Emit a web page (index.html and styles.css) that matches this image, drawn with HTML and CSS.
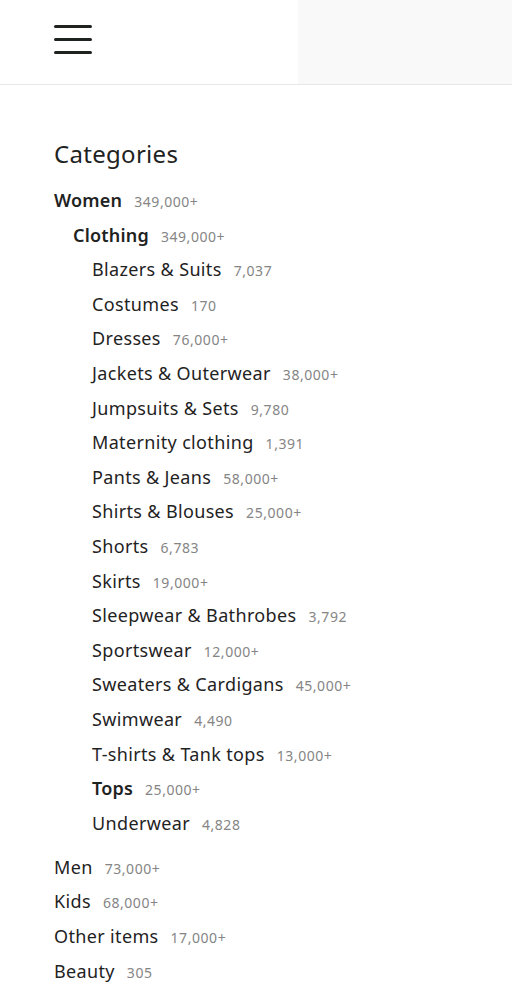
FILE: index.html
```html
<!DOCTYPE html>
<html lang="en">
<head>
<meta charset="utf-8">
<title>Categories</title>
<link rel="stylesheet" href="styles.css">
</head>
<body>
<header class="header">
  <div class="header-left">
    <button class="menu-btn" aria-label="Menu">
      <svg width="38" height="29" viewBox="0 0 38 29" aria-hidden="true">
        <path d="M1.5 1.5H36.5M1.5 14.5H36.5M1.5 27.5H36.5" stroke="#1f231f" stroke-width="3" stroke-linecap="round" fill="none"/>
      </svg>
    </button>
  </div>
  <div class="header-right"></div>
</header>
<main class="content">
  <h2 class="title">Categories</h2>
  <ul class="tree">
    <li class="row lvl0 active"><span class="label">Women</span><span class="count">349,000+</span></li>
    <li class="row lvl1 active"><span class="label">Clothing</span><span class="count">349,000+</span></li>
    <li class="row lvl2"><span class="label">Blazers &amp; Suits</span><span class="count">7,037</span></li>
    <li class="row lvl2"><span class="label">Costumes</span><span class="count">170</span></li>
    <li class="row lvl2"><span class="label">Dresses</span><span class="count">76,000+</span></li>
    <li class="row lvl2"><span class="label">Jackets &amp; Outerwear</span><span class="count">38,000+</span></li>
    <li class="row lvl2"><span class="label">Jumpsuits &amp; Sets</span><span class="count">9,780</span></li>
    <li class="row lvl2"><span class="label">Maternity clothing</span><span class="count">1,391</span></li>
    <li class="row lvl2"><span class="label">Pants &amp; Jeans</span><span class="count">58,000+</span></li>
    <li class="row lvl2"><span class="label">Shirts &amp; Blouses</span><span class="count">25,000+</span></li>
    <li class="row lvl2"><span class="label">Shorts</span><span class="count">6,783</span></li>
    <li class="row lvl2"><span class="label">Skirts</span><span class="count">19,000+</span></li>
    <li class="row lvl2"><span class="label">Sleepwear &amp; Bathrobes</span><span class="count">3,792</span></li>
    <li class="row lvl2"><span class="label">Sportswear</span><span class="count">12,000+</span></li>
    <li class="row lvl2"><span class="label">Sweaters &amp; Cardigans</span><span class="count">45,000+</span></li>
    <li class="row lvl2"><span class="label">Swimwear</span><span class="count">4,490</span></li>
    <li class="row lvl2"><span class="label">T-shirts &amp; Tank tops</span><span class="count">13,000+</span></li>
    <li class="row lvl2 active"><span class="label">Tops</span><span class="count">25,000+</span></li>
    <li class="row lvl2 last"><span class="label">Underwear</span><span class="count">4,828</span></li>
    <li class="row lvl0"><span class="label">Men</span><span class="count">73,000+</span></li>
    <li class="row lvl0"><span class="label">Kids</span><span class="count">68,000+</span></li>
    <li class="row lvl0"><span class="label">Other items</span><span class="count">17,000+</span></li>
    <li class="row lvl0"><span class="label">Beauty</span><span class="count">305</span></li>
  </ul>
</main>
</body>
</html>
```
FILE: styles.css
```css
* { box-sizing: border-box; }
html, body {
  margin: 0;
  padding: 0;
  background: #ffffff;
  font-family: "Noto Sans", "Open Sans", sans-serif;
  color: #1f231f;
}
.header {
  display: flex;
  height: 85px;
  border-bottom: 1px solid #e8e8e8;
}
.header-left {
  flex: 0 0 298px;
  display: flex;
  align-items: center;
  padding-left: 54px;
}
.header-right {
  flex: 1;
  background: #f9f9f9;
}
.menu-btn {
  border: 0;
  background: none;
  padding: 0;
  margin-top: -5px;
  display: flex;
}
.content {
  padding: 53px 54px 0;
}
.title {
  margin: 0 0 15px;
  font-size: 24px;
  font-weight: 400;
  line-height: 32px;
  letter-spacing: 0.3px;
}
.tree {
  list-style: none;
  margin: 0;
  padding: 0;
}
.row {
  display: flex;
  align-items: baseline;
  gap: 12px;
  height: 34.6px;
  line-height: 30px;
}
.label {
  font-size: 18px;
  letter-spacing: 0.35px;
}
.count {
  font-size: 14px;
  letter-spacing: 0.55px;
  color: #858585;
}
.active .label { font-weight: 600; letter-spacing: 0.2px; }
.lvl1 { padding-left: 19px; }
.lvl2 { padding-left: 38px; }
.last { margin-bottom: 9.5px; }
```
